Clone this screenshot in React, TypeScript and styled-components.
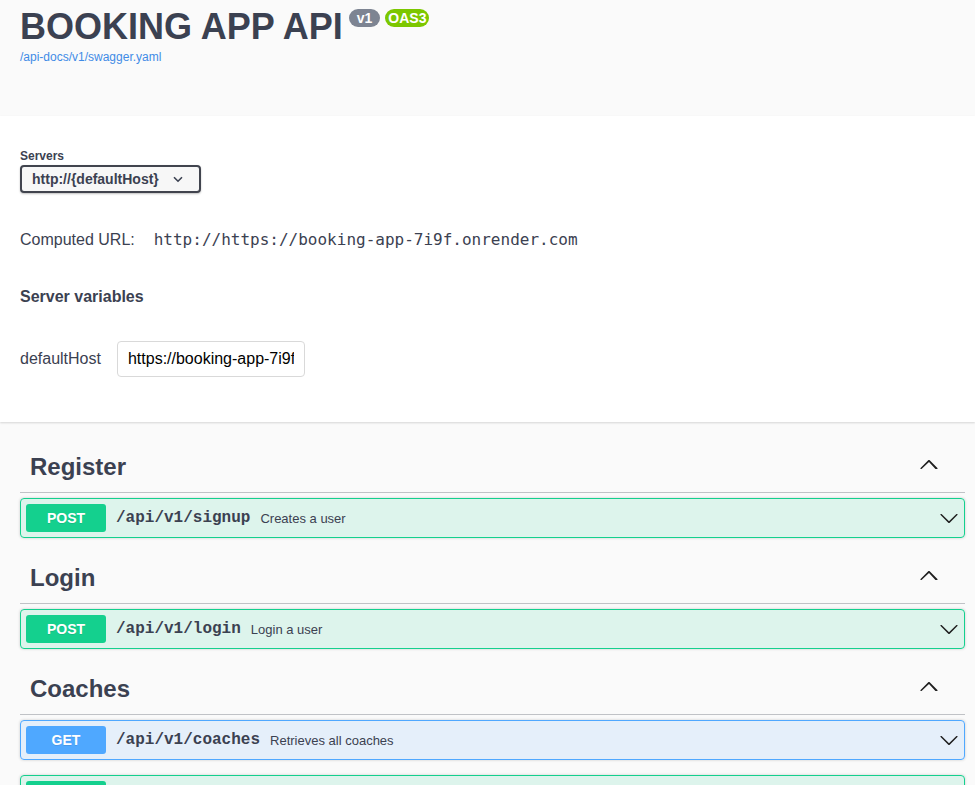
import React from "react";
import styled, { createGlobalStyle } from "styled-components";

const GlobalStyle = createGlobalStyle`
  html, body {
    margin: 0;
    padding: 0;
    background: #fafafa;
    font-family: "Liberation Sans", Arial, sans-serif;
    color: #3b4151;
  }
  * { box-sizing: border-box; }
`;

const Page = styled.div`
  width: 100%;
  min-height: 785px;
  background: #fafafa;
`;

const Wrapper = styled.div`
  padding: 0 10px 0 20px;
`;

const Info = styled.div`
  padding: 6px 0 52px;
`;

const TitleRow = styled.div`
  display: flex;
  align-items: flex-start;
`;

const Title = styled.h2`
  margin: 0;
  font-size: 36px;
  line-height: 42px;
  font-weight: 700;
  color: #3b4151;
`;

const Badges = styled.div`
  display: flex;
  gap: 5px;
  margin: 3px 0 0 6px;
`;

const Badge = styled.span<{ $bg: string; $px: number }>`
  display: inline-block;
  height: 18px;
  line-height: 18px;
  padding: 0 ${(p) => p.$px}px;
  border-radius: 57px;
  background: ${(p) => p.$bg};
  color: #fff;
  font-size: 14px;
  font-weight: 700;
`;

const SpecLink = styled.a`
  display: block;
  margin-top: 2px;
  font-size: 12px;
  line-height: 14px;
  color: #3f8be6;
  text-decoration: none;
`;

const SchemeContainer = styled.section`
  background: #fff;
  box-shadow: 0 1px 2px 0 rgba(0, 0, 0, 0.15);
  padding: 33px 0 45px;
  margin-bottom: 20px;
`;

const FieldLabel = styled.div`
  font-size: 12px;
  line-height: 14px;
  font-weight: 700;
  color: #3b4151;
`;

const Select = styled.div`
  margin-top: 2px;
  width: 181px;
  height: 28px;
  display: flex;
  align-items: center;
  justify-content: space-between;
  padding: 0 16px 0 10px;
  border: 2px solid #41444e;
  border-radius: 4px;
  background: #f7f7f7;
  box-shadow: 0 1px 2px 0 rgba(0, 0, 0, 0.25);
  font-size: 14px;
  font-weight: 700;
  color: #3b4151;
`;

const ComputedRow = styled.div`
  margin-top: 37px;
  display: flex;
  align-items: baseline;
  gap: 19px;
  font-size: 16px;
  line-height: 20px;
  color: #3b4151;
`;

const Code = styled.code`
  font-family: "DejaVu Sans Mono", monospace;
  font-size: 16px;
  color: #3b4151;
`;

const SubHeading = styled.h4`
  margin: 37px 0 0;
  font-size: 16px;
  line-height: 20px;
  font-weight: 700;
  color: #3b4151;
`;

const VarRow = styled.div`
  margin-top: 34px;
  display: flex;
  align-items: center;
  gap: 16px;
  font-size: 16px;
  color: #3b4151;
`;

const TextInput = styled.input`
  width: 188px;
  height: 36px;
  padding: 8px 10px;
  border: 1px solid #d9d9d9;
  border-radius: 4px;
  background: #fff;
  font-family: "Liberation Sans", Arial, sans-serif;
  font-size: 16px;
  color: #000;
  outline: none;
`;

const TagSection = styled.div``;

const TagHeader = styled.h3`
  margin: 0 0 5px;
  height: 51px;
  padding: 10px 20px 10px 10px;
  display: flex;
  align-items: center;
  justify-content: space-between;
  border-bottom: 1px solid rgba(59, 65, 81, 0.3);
  font-size: 24px;
  line-height: 30px;
  font-weight: 700;
  color: #3b4151;
`;

const TagToggle = styled.span`
  display: flex;
  margin: 0 6px 6px 0;
`;

const Opblock = styled.div<{ $color: string; $bg: string }>`
  margin-bottom: 15px;
  border: 1px solid ${(p) => p.$color};
  border-radius: 4px;
  background: ${(p) => p.$bg};
  box-shadow: 0 0 3px rgba(0, 0, 0, 0.19);
`;

const Summary = styled.div`
  display: flex;
  align-items: center;
  padding: 5px;
`;

const Method = styled.span<{ $color: string }>`
  width: 80px;
  height: 28px;
  display: flex;
  align-items: center;
  justify-content: center;
  border-radius: 3px;
  background: ${(p) => p.$color};
  color: #fff;
  font-size: 14px;
  font-weight: 700;
  text-shadow: 0 1px 0 rgba(0, 0, 0, 0.1);
`;

const Path = styled.span`
  padding: 0 10px;
  font-family: "Liberation Mono", "Courier New", monospace;
  font-size: 16px;
  font-weight: 700;
  color: #3b4151;
`;

const Desc = styled.span`
  flex: 1;
  font-size: 13px;
  color: #3b4151;
`;

const ArrowSvg = styled.svg`
  display: block;
  flex-shrink: 0;
  fill: #1f1f1f;
`;

const ArrowDown = () => (
  <ArrowSvg width="20" height="20" viewBox="0 0 20 20">
    <path d="M17.418 6.109c.272-.268.709-.268.979 0s.271.701 0 .969l-7.908 7.83c-.27.268-.707.268-.979 0l-7.908-7.83c-.27-.268-.27-.701 0-.969.271-.268.709-.268.979 0L10 13.25l7.418-7.141z" />
  </ArrowSvg>
);

const ArrowUp = () => (
  <ArrowSvg width="20" height="20" viewBox="0 0 20 20">
    <path d="M17.418 14.908c-.271.268-.709.268-.979 0L10 8.113 2.561 14.908c-.27.268-.707.268-.979 0-.27-.268-.27-.701 0-.969l7.908-7.83c.27-.268.707-.268.979 0l7.908 7.83c.27.268.27.701 0 .969z" />
  </ArrowSvg>
);

const SmallChevron = () => (
  <svg width="10" height="7" viewBox="0 0 10 7">
    <polyline points="1,1.2 5,5.2 9,1.2" fill="none" stroke="#3b4151" strokeWidth="1.6" />
  </svg>
);

const METHODS: Record<string, { color: string; bg: string }> = {
  POST: { color: "#14d08e", bg: "rgba(20,208,142,.12)" },
  GET: { color: "#4fa8ff", bg: "rgba(79,168,255,.12)" },
};

type Op = { method: string; path: string; desc: string };
type Tag = { name: string; ops: Op[] };

const TAGS: Tag[] = [
  { name: "Register", ops: [{ method: "POST", path: "/api/v1/signup", desc: "Creates a user" }] },
  { name: "Login", ops: [{ method: "POST", path: "/api/v1/login", desc: "Login a user" }] },
  {
    name: "Coaches",
    ops: [
      { method: "GET", path: "/api/v1/coaches", desc: "Retrieves all coaches" },
      { method: "POST", path: "/api/v1/coaches", desc: "Creates a coach" },
    ],
  },
];

export default function App() {
  return (
    <Page>
      <GlobalStyle />
      <Wrapper>
        <Info>
          <TitleRow>
            <Title>BOOKING APP API</Title>
            <Badges>
              <Badge $bg="#7d8492" $px={8}>v1</Badge>
              <Badge $bg="#7cc700" $px={3}>OAS3</Badge>
            </Badges>
          </TitleRow>
          <SpecLink href="#">/api-docs/v1/swagger.yaml</SpecLink>
        </Info>
      </Wrapper>
      <SchemeContainer>
        <Wrapper>
          <FieldLabel>Servers</FieldLabel>
          <Select>
            <span>http://{"{defaultHost}"}</span>
            <SmallChevron />
          </Select>
          <ComputedRow>
            <span>Computed URL:</span>
            <Code>http://https://booking-app-7i9f.onrender.com</Code>
          </ComputedRow>
          <SubHeading>Server variables</SubHeading>
          <VarRow>
            <span>defaultHost</span>
            <TextInput readOnly defaultValue="https://booking-app-7i9f.onrender.com" />
          </VarRow>
        </Wrapper>
      </SchemeContainer>
      <Wrapper>
        {TAGS.map((tag) => (
          <TagSection key={tag.name}>
            <TagHeader>
              <span>{tag.name}</span>
              <TagToggle>
                <ArrowUp />
              </TagToggle>
            </TagHeader>
            {tag.ops.map((op) => (
              <Opblock key={op.method + op.path} $color={METHODS[op.method].color} $bg={METHODS[op.method].bg}>
                <Summary>
                  <Method $color={METHODS[op.method].color}>{op.method}</Method>
                  <Path>{op.path}</Path>
                  <Desc>{op.desc}</Desc>
                  <ArrowDown />
                </Summary>
              </Opblock>
            ))}
          </TagSection>
        ))}
      </Wrapper>
    </Page>
  );
}
